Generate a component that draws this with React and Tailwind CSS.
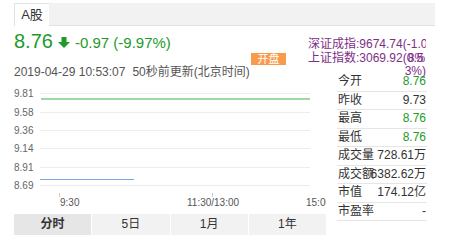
import React from 'react';

const GREEN = '#1d9a2b';

const stats = [
  ['今开', '8.76', true],
  ['昨收', '9.73'],
  ['最高', '8.76', true],
  ['最低', '8.76', true],
  ['成交量', '728.61万'],
  ['成交额', '6382.62万'],
  ['市值', '174.12亿'],
  ['市盈率', '-'],
];

const grid = [
  { y: 14, label: '9.81' },
  { y: 33, label: '9.58' },
  { y: 51, label: '9.36' },
  { y: 69, label: '9.14' },
  { y: 88, label: '8.91' },
  { y: 106, label: '8.69' },
];

function Chart() {
  return (
    <svg width="312" height="135" className="block" fontFamily="Liberation Sans, sans-serif">
      {grid.map((g) => (
        <g key={g.label}>
          <line x1="26" x2="296" y1={g.y + 0.5} y2={g.y + 0.5} stroke="#ececec" />
          <text x="0" y={g.y + 3.5} fontSize="10" fill="#666">{g.label}</text>
        </g>
      ))}
      {/* price line */}
      <line x1="27" x2="296" y1="20" y2="20" stroke="#7fcb84" strokeWidth="1.5" />
      {/* avg line */}
      <line x1="26" x2="120" y1="100.5" y2="100.5" stroke="#74a9e2" strokeWidth="1" />
      <line x1="45.5" x2="45.5" y1="114" y2="118" stroke="#ccc" />
      <line x1="198.5" x2="198.5" y1="114" y2="118" stroke="#ccc" />
      <text x="46" y="126.5" fontSize="10" fill="#555">9:30</text>
      <text x="173" y="126.5" fontSize="10" fill="#555">11:30/13:00</text>
      <text x="292" y="126.5" fontSize="10" fill="#555">15:00</text>
    </svg>
  );
}

export default function App() {
  return (
    <div className="relative w-[449px] h-[240px] overflow-hidden bg-white text-[#333] font-['Liberation_Sans','Noto_Sans_CJK_SC',sans-serif]">
      {/* market tab bar */}
      <div className="mt-[3px] mx-[14px] h-[23px] bg-[#f2f2f2] border-b border-[#e2e2e2] flex">
        <div className="w-[35px] h-[23px] bg-white border-l border-t border-[#e2e2e2] text-[13px] leading-[22px] text-center">
          A股
        </div>
      </div>

      {/* index quotes overlay */}
      <div className="absolute left-[308px] top-[37px] w-[118px] text-[12px] leading-[14px] text-[#7d2e87]">
        <div className="whitespace-nowrap overflow-hidden">深证成指:9674.74(-1.06%)</div>
        <div className="whitespace-nowrap overflow-hidden">
          上证指数:3069.92(<span className="relative">0.5<span className="absolute left-[1px] top-0">8%</span></span>
        </div>
        <div className="text-right leading-[12px]">3%)</div>
      </div>

      {/* open badge */}
      <div className="absolute left-[251px] top-[53px] w-[35px] h-[12px] bg-[#f89c4c] text-white text-[11px] leading-[12px] text-center">
        开盘
      </div>

      <div className="flex px-[14px] gap-[11px]">
        {/* left column */}
        <div className="w-[312px] flex flex-col">
          <div className="mt-[3px] h-[24px] flex items-baseline" style={{ color: GREEN }}>
            <span className="text-[20px] leading-[24px]">8.76</span>
            <svg width="12" height="11" viewBox="0 0 12 11" className="ml-[5px] self-center mt-[3px]">
              <rect x="3.5" y="0" width="5" height="5" fill={GREEN} />
              <polygon points="0,5 12,5 6,11" fill={GREEN} />
            </svg>
            <span className="ml-[5px] text-[15px]">-0.97 (-9.97%)</span>
          </div>
          <div className="mt-[12px] h-[14px] text-[12px] leading-[14px] text-[#555] whitespace-nowrap">
            2019-04-29 10:53:07<span className="ml-[7px]">50秒前更新(北京时间)</span>
          </div>
          <Chart />
          <div className="flex gap-px h-[21px]">
            <div className="flex-1 bg-[#e6e6e6] text-[12px] leading-[21px] text-center font-bold">分时</div>
            <div className="flex-1 bg-[#f2f2f2] text-[12px] leading-[21px] text-center">5日</div>
            <div className="flex-1 bg-[#f2f2f2] text-[12px] leading-[21px] text-center">1月</div>
            <div className="flex-1 bg-[#f2f2f2] text-[12px] leading-[21px] text-center">1年</div>
          </div>
        </div>

        {/* right stats column */}
        <div className="w-[90px] pt-[47px]">
          {stats.map(([label, value, green]) => (
            <div key={label} className="relative h-[18.5px] border-b border-[#e5e5e5] text-[12px] leading-[17px] pl-[1px]">
              <span>{label}</span>
              <span className="absolute right-[1px] top-0" style={green ? { color: GREEN } : undefined}>
                {value}
              </span>
            </div>
          ))}
        </div>
      </div>
    </div>
  );
}
